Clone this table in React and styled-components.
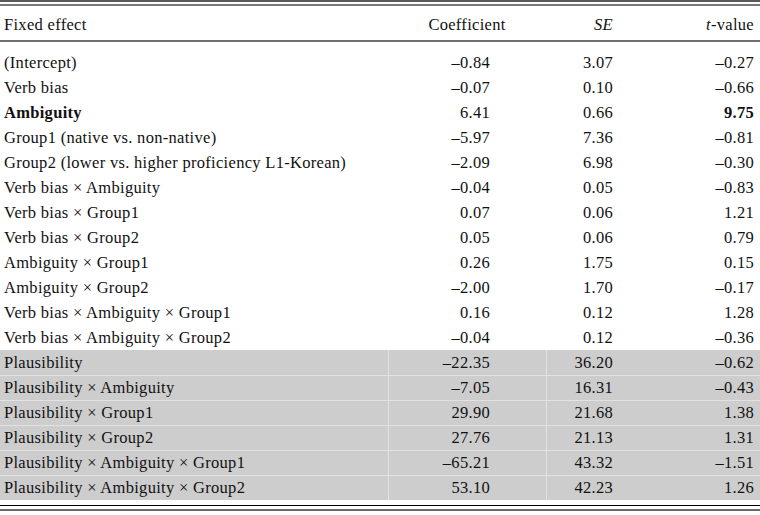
import * as React from "react"
import styled, { createGlobalStyle } from 'styled-components'

const Global = createGlobalStyle`
body{
  margin: 0;
  background: #fff;
  font-family: "Liberation Serif", "Times New Roman", serif;
  color: #111;
}
`

const Table = styled.div`
width: 760px;
height: 515px;
display: flex;
flex-direction: column;
font-size: 16.5px;
letter-spacing: 0.3px;
`

const TopRule = styled.div`
border-top: 2px solid #5a5a5a;
border-bottom: 2px solid #7a7a7a;
height: 2px;
`

const Row = styled.div`
display: grid;
grid-template-columns: 388px 158px 100px 114px;
height: ${p => p.h || 25}px;
align-items: center;
background: ${p => p.shaded ? '#cdcdcd' : 'transparent'};
border-top: ${p => p.shaded && !p.first ? '1px solid #e2e2e2' : 'none'};
box-sizing: border-box;
`

const Head = styled(Row)`
padding-top: 4px;
border-bottom: 2px solid #707070;
`

const Label = styled.div`
padding-left: 4px;
font-weight: ${p => p.bold ? 'bold' : 'normal'};
white-space: nowrap;
`

const Num = styled.div`
height: 100%;
display: flex;
align-items: center;
justify-content: ${p => p.center ? 'center' : 'flex-end'};
padding-right: ${p => p.pr}px;
font-weight: ${p => p.bold ? 'bold' : 'normal'};
border-left: ${p => p.line ? '1px solid #e2e2e2' : 'none'};
box-sizing: border-box;
`

const Gap = styled.div`
height: 8px;
`

const BottomRule = styled.div`
margin-top: 5px;
border-top: 1px solid #000;
border-bottom: 2px solid #6a6a6a;
height: 3px;
`

const rows = [
  ['(Intercept)', '–0.84', '3.07', '–0.27'],
  ['Verb bias', '–0.07', '0.10', '–0.66'],
  ['Ambiguity', '6.41', '0.66', '9.75', true],
  ['Group1 (native vs. non-native)', '–5.97', '7.36', '–0.81'],
  ['Group2 (lower vs. higher proficiency L1-Korean)', '–2.09', '6.98', '–0.30'],
  ['Verb bias × Ambiguity', '–0.04', '0.05', '–0.83'],
  ['Verb bias × Group1', '0.07', '0.06', '1.21'],
  ['Verb bias × Group2', '0.05', '0.06', '0.79'],
  ['Ambiguity × Group1', '0.26', '1.75', '0.15'],
  ['Ambiguity × Group2', '–2.00', '1.70', '–0.17'],
  ['Verb bias × Ambiguity × Group1', '0.16', '0.12', '1.28'],
  ['Verb bias × Ambiguity × Group2', '–0.04', '0.12', '–0.36'],
]

const shadedRows = [
  ['Plausibility', '–22.35', '36.20', '–0.62'],
  ['Plausibility × Ambiguity', '–7.05', '16.31', '–0.43'],
  ['Plausibility × Group1', '29.90', '21.68', '1.38'],
  ['Plausibility × Group2', '27.76', '21.13', '1.31'],
  ['Plausibility × Ambiguity × Group1', '–65.21', '43.32', '–1.51'],
  ['Plausibility × Ambiguity × Group2', '53.10', '42.23', '1.26'],
]

const App = () => {
  return (
    <Table>
      <Global />
      <TopRule />
      <Head h={36}>
        <Label>Fixed effect</Label>
        <Num center>Coefficient</Num>
        <Num pr={33}><i>SE</i></Num>
        <Num pr={6}><span><i>t</i>-value</span></Num>
      </Head>
      <Gap />
      {rows.map(r => (
        <Row key={r[0]}>
          <Label bold={r[4]}>{r[0]}</Label>
          <Num pr={56}>{r[1]}</Num>
          <Num pr={33}>{r[2]}</Num>
          <Num pr={6} bold={r[4]}>{r[3]}</Num>
        </Row>
      ))}
      {shadedRows.map((r, i) => (
        <Row key={r[0]} shaded first={i === 0}>
          <Label>{r[0]}</Label>
          <Num pr={56} line>{r[1]}</Num>
          <Num pr={33} line>{r[2]}</Num>
          <Num pr={6}>{r[3]}</Num>
        </Row>
      ))}
      <BottomRule />
    </Table>
  )
}

export default App
